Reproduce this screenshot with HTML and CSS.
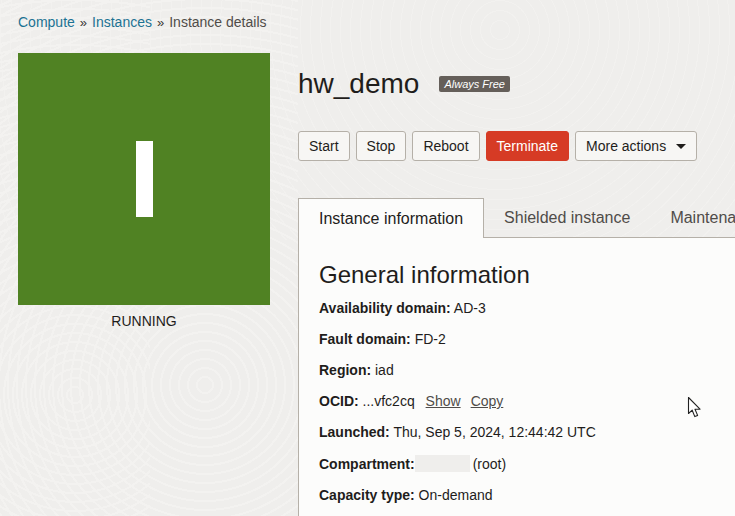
FILE: index.html
```html
<!DOCTYPE html>
<html lang="en">
<head>
<meta charset="utf-8">
<title>Instance details</title>
<link rel="stylesheet" href="styles.css">
</head>
<body>
<nav class="crumbs">
  <a href="#">Compute</a><span class="sep">»</span><a href="#">Instances</a><span class="sep">»</span><span>Instance details</span>
</nav>
<div class="page">
  <aside class="side">
    <div class="tile"><span class="bar"></span></div>
    <div class="state">RUNNING</div>
  </aside>
  <main class="main">
    <header class="head">
      <h1>hw_demo</h1>
      <span class="badge">Always Free</span>
    </header>
    <div class="actions">
      <button class="btn">Start</button>
      <button class="btn">Stop</button>
      <button class="btn">Reboot</button>
      <button class="btn danger">Terminate</button>
      <button class="btn more">More actions<span class="caret"></span></button>
    </div>
    <div class="tabs">
      <div class="tab active">Instance information</div>
      <div class="tab">Shielded instance</div>
      <div class="tab">Maintenance</div>
    </div>
    <section class="panel">
      <h2>General information</h2>
      <p><b>Availability domain:</b> AD-3</p>
      <p><b>Fault domain:</b> FD-2</p>
      <p><b>Region:</b> iad</p>
      <p><b>OCID:</b> ...vfc2cq <a class="act" href="#">Show</a><a class="act" href="#">Copy</a></p>
      <p><b>Launched:</b> Thu, Sep 5, 2024, 12:44:42 UTC</p>
      <p><b>Compartment:</b><span class="redact"></span>(root)</p>
      <p><b>Capacity type:</b> On-demand</p>
    </section>
  </main>
</div>
<svg class="cursor" width="16" height="24" viewBox="0 0 16 24" aria-hidden="true">
  <path d="M1.5 1.5V17.5L5.2 14.2L7.8 20.6L10.6 19.4L8 13.2H13Z" fill="#fff" stroke="#222" stroke-width="1.1" stroke-linejoin="round"/>
</svg>
</body>
</html>
```

FILE: styles.css
```css
* { box-sizing: border-box; }
html, body { height: 100%; }
body {
  margin: 0;
  height: 516px;
  overflow: hidden;
  position: relative;
  font-family: "Liberation Sans", Arial, sans-serif;
  font-size: 14px;
  color: #1f1d1b;
  background-color: #efeeec;
  background-image:
    repeating-radial-gradient(circle at 75px 395px, transparent 0 7px, #f3f2f0 7px 9px),
    repeating-radial-gradient(circle at 205px 385px, transparent 0 7px, #f3f2f0 7px 9px),
    repeating-radial-gradient(circle at 500px 30px, transparent 0 9px, #f2f1ef 9px 10px);
  background-size: 150px 516px, 298px 516px, 100% 240px;
  background-repeat: no-repeat;
}
.crumbs {
  height: 53px;
  padding: 14px 0 0 18px;
  line-height: 16px;
  font-size: 14px;
  color: #4f4c49;
}
.crumbs a { color: #1c7293; text-decoration: none; }
.sep { margin: 0 5px; color: #3a3835; font-size: 13px; }
.page { display: flex; align-items: flex-start; padding-left: 18px; }
.side { width: 252px; flex: none; }
.tile {
  height: 252px;
  background: #508223;
  display: flex;
  align-items: center;
  justify-content: center;
}
.bar { width: 17px; height: 76px; background: #fff; }
.state { margin-top: 8px; text-align: center; font-size: 14px; line-height: 17px; }
.main { margin-left: 28px; width: 437px; flex: none; }
.head { display: flex; align-items: center; height: 62px; padding-bottom: 1px; }
h1 { margin: 0; font-size: 28px; font-weight: 400; line-height: 62px; color: #1f1d1b; }
.badge {
  margin-left: 20px;
  padding: 0 5px;
  height: 16px;
  line-height: 16px;
  font-size: 11px;
  font-style: italic;
  color: #fff;
  background: #655f5a;
  border-radius: 2px;
}
.actions { display: flex; gap: 6px; margin-top: 16px; }
.btn {
  height: 30px;
  padding: 0 10px;
  font: 14px "Liberation Sans", Arial, sans-serif;
  color: #1f1d1b;
  background: #f7f6f4;
  border: 1px solid #b5b0a8;
  border-radius: 3px;
}
.danger { background: #d63b25; border-color: #d63b25; color: #fff; }
.more { display: flex; align-items: center; }
.caret {
  margin-left: 10px;
  border-left: 5px solid transparent;
  border-right: 5px solid transparent;
  border-top: 5px solid #1f1d1b;
}
.tabs {
  display: flex;
  margin-top: 37px;
  height: 40px;
  border-bottom: 1px solid #b5b0a8;
  white-space: nowrap;
}
.tab { padding: 0 20px; line-height: 39px; font-size: 16px; color: #4f4c49; }
.active {
  height: 40px;
  background: #fcfcfb;
  color: #1f1d1b;
  border: 1px solid #b5b0a8;
  border-bottom: 0;
  line-height: 40px;
}
.panel {
  background: #fcfcfb;
  border-left: 1px solid #b5b0a8;
  padding: 23px 0 0 20px;
  height: 279px;
  font-size: 14px;
}
h2 { margin: 0 0 11px; font-size: 24px; font-weight: 400; line-height: 28px; }
p { margin: 0 0 15px; line-height: 16px; white-space: nowrap; }
.act { margin-left: 7px; margin-right: 3px; color: #4f4c49; }
.redact { display: inline-block; width: 55px; height: 17px; margin-right: 3px; vertical-align: -3px; background: #efeeec; }
.cursor { position: absolute; left: 687px; top: 396px; }
```
